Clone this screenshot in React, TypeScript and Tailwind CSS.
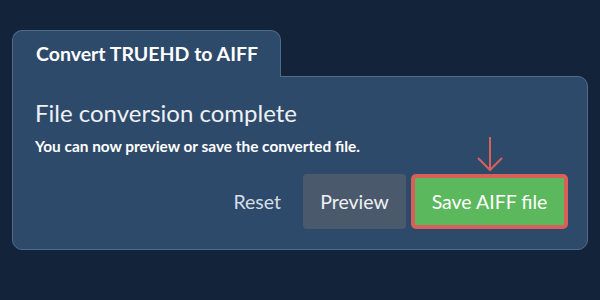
export default function App() {
  return (
    <div
      className="w-[600px] h-[300px] bg-[#13233a] pt-[30px] pl-[12px]"
      style={{ fontFamily: 'Lato, "Open Sans", sans-serif' }}
    >
      <div className="flex flex-col w-[576px]">
        <div className="relative z-10 w-[269px] h-[47px] -mb-px rounded-t-[10px] border border-b-0 border-[#4f6b8b] bg-[#2e4a6a] pl-[23px] flex items-center">
          <span className="text-white font-bold text-[19.5px]">Convert TRUEHD to AIFF</span>
        </div>
        <div className="h-[174px] rounded-b-[10px] rounded-tr-[10px] border border-[#4f6b8b] bg-[#2e4a6a] pl-[22px] pr-[19px] pt-[21px]">
          <h1 className="text-[#eef1f4] text-[24px] leading-[30px]">File conversion complete</h1>
          <p className="text-white font-bold text-[15.4px] leading-[20px] mt-[8px]">You can now preview or save the converted file.</p>
          <div className="flex items-center justify-end gap-[5px] mt-[18px]">
            <button className="text-[#d6dde6] text-[19.5px] mr-[17px]">Reset</button>
            <button className="h-[55px] w-[103px] rounded-[4px] bg-[#4a5a6c] text-[#eef1f4] text-[19.5px]">Preview</button>
            <div className="relative">
              <svg
                className="absolute left-1/2 -translate-x-1/2 -top-[38px]"
                width="30"
                height="36"
                viewBox="0 0 30 36"
                fill="none"
                stroke="#d9605a"
                strokeWidth="2"
              >
                <path d="M15 1 V34 M3 22 L15 34 L27 22" />
              </svg>
              <button className="h-[55px] w-[157px] rounded-[5px] border-[4px] border-[#d9605a] bg-[#5cb85c] text-white text-[19.5px]">
                Save AIFF file
              </button>
            </div>
          </div>
        </div>
      </div>
    </div>
  );
}
